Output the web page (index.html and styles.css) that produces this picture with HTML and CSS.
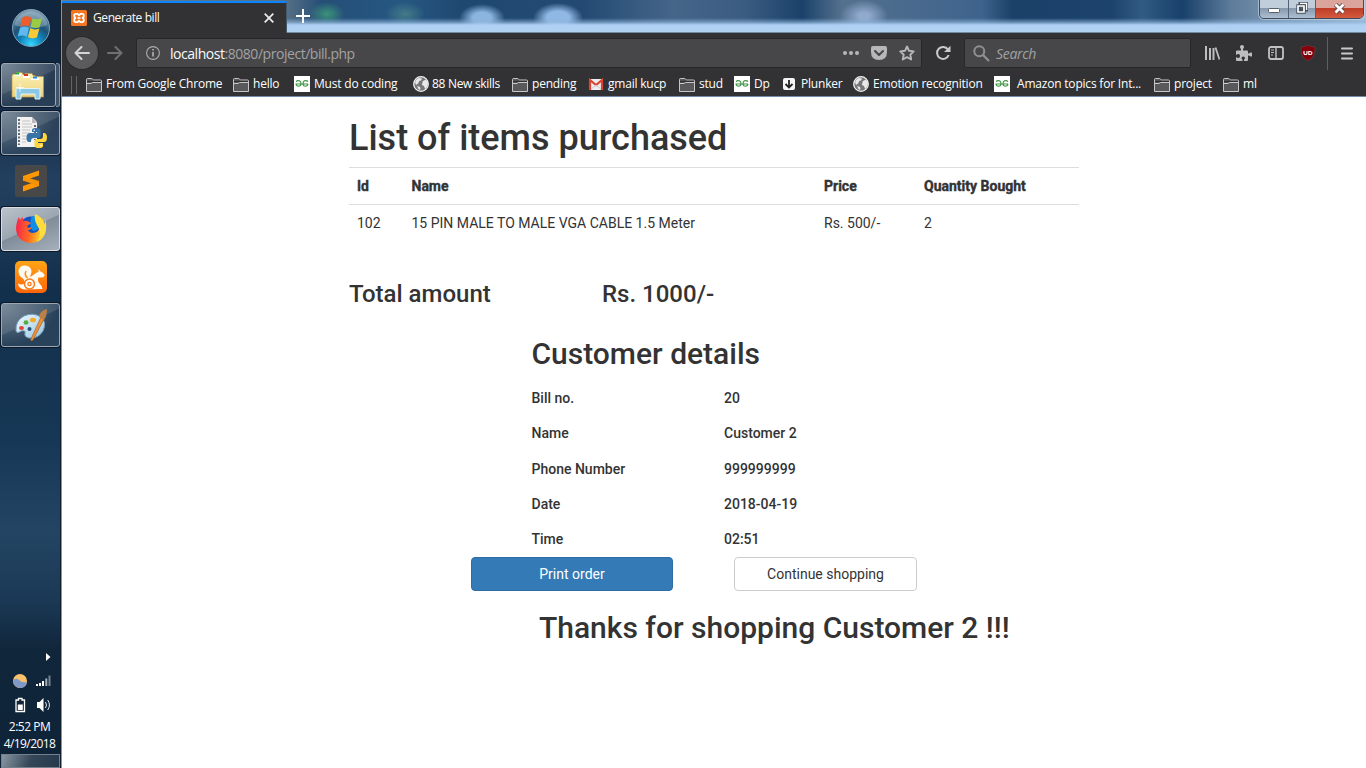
FILE: index.html
```html
<!DOCTYPE html>
<html lang="en">
<head>
<meta charset="utf-8">
<title>Generate bill</title>
<link rel="stylesheet" href="styles.css">
</head>
<body>
<svg class="defs" width="0" height="0" aria-hidden="true">
  <defs>
    <radialGradient id="orb" cx=".5" cy=".95" r=".9"><stop offset="0" stop-color="#35d9ff"/><stop offset=".35" stop-color="#1183bb"/><stop offset=".6" stop-color="#1c5277"/><stop offset="1" stop-color="#7e9cae"/></radialGradient>
    <linearGradient id="fold" x2="0" y2="1"><stop offset="0" stop-color="#fdf2b9"/><stop offset="1" stop-color="#ecd17b"/></linearGradient>
    <linearGradient id="fox" x1="0" y1=".4" x2="1" y2=".5"><stop offset="0" stop-color="#f5254d"/><stop offset=".45" stop-color="#ff6a22"/><stop offset=".8" stop-color="#ffc32a"/><stop offset="1" stop-color="#ffe438"/></linearGradient>
    <linearGradient id="uc" x2="0" y2="1"><stop offset="0" stop-color="#ffa516"/><stop offset="1" stop-color="#ff6508"/></linearGradient>
    <linearGradient id="pal" x2="1" y2="1"><stop offset="0" stop-color="#f4fbff"/><stop offset="1" stop-color="#93c4e5"/></linearGradient>
    <symbol id="folder" viewBox="0 0 16 14"><path d="M.5 13.500V1.500q0-1 1-1h4q.8 0 1.200.8l.6.7h7.200q1 0 1 1v10.500z" fill="#59595b" stroke="#c6c6c8"/><path d="M1 3.500h14" stroke="#303032" stroke-width="1.500"/><path d="M.5 5.500h4.500l1.500-1h9" fill="none" stroke="#c6c6c8"/></symbol>
    <symbol id="gfg" viewBox="0 0 16 16"><path fill="#fff" d="M0 0h16v16H0z"/><path d="M2 5.500q1.500-1.300 3.500-.7 1.500.8 1.500 3 0 2.500-2.300 2.500-2.400 0-2.700-2.300h12M14 5.500q-1.500-1.300-3.500-.7Q9 5.600 9 7.800q0 2.500 2.300 2.500 2.400 0 2.700-2.300" fill="none" stroke="#3f9344" stroke-width="1.100"/></symbol>
    <symbol id="globe" viewBox="0 0 16 16"><circle cx="8" cy="8" r="7.300" fill="#777779" stroke="#eee" stroke-width="1.300"/><path d="M2 6q1-3 4-4l3 .5-1 2-2 .5-.5 2L3 9zM10 5l3-1.500 2 3.500-1 4-2 2-1-3-2-1 .5-3zM4 10l3 1 .5 2L6 14z" fill="#e9e9e9"/></symbol>
  </defs>
</svg>
<div class="desktop">
  <aside class="taskbar">
    <div class="start"><svg width="40" height="40" viewBox="0 0 40 40"><circle cx="20" cy="20" r="18.500" fill="url(#orb)" stroke="#7da0b8" stroke-width="1"/><path d="M3.500 17Q5 6 20 3.500 35 6 36.500 17 20 24 3.500 17z" fill="#d7e6ef" opacity=".28"/><path d="M11.500 9.500q4-2.500 9 0l-2.200 9q-4-2-9 0z" fill="#ed5c2b"/><path d="M21.700 10.200q4.500 2.200 9.300-.2l-2.200 9q-4.700 2-9.300-.2z" fill="#9acb43"/><path d="M9 19.800q4.500-2 9 .2l-2.200 8.800q-4.200-2.500-9-.3z" fill="#5fb8ee"/><path d="M19.200 20.300q4.400 2.200 9.200.1l-2.400 8.900q-4.400 2-9-.3z" fill="#fdc937"/></svg></div>
    <div class="slot stacked"><div class="task"><svg width="34" height="32" viewBox="0 0 34 32"><path d="M1 28V7q0-2 2-2h2V3.500h6l1 2h2v-1h7l1 2h2v1h8.500v20.500z" fill="url(#fold)" stroke="#bb9540" stroke-width=".7"/><path d="M4 6h6M12 8h7M20 10h8" stroke="#fff" stroke-width="2"/><path d="M4 4.500h4" stroke="#20a638" stroke-width="2"/><path d="M13 6h4" stroke="#d73425" stroke-width="2"/><path d="M22 8.500h4" stroke="#2388d8" stroke-width="2"/><path d="M5 30V21q0-1.500 2-1.500h20q2 0 2 1.500v9h-5v-5H10v5z" fill="#8bc8e6" stroke="#e0f4fb"/><path d="M9 14v9M5 18.500h8" stroke="#fff" stroke-width=".9" opacity=".8"/></svg></div><div class="stackedge"></div></div>
    <div class="slot"><div class="task"><svg width="32" height="34" viewBox="0 0 32 34"><path d="M2 1h15l5 5v25H2z" fill="#f2f2f2"/><path d="M17 1v6h5z" fill="#bbb"/><path d="M4 3v26M20 9v15" stroke="#353c44" stroke-width="1.500" stroke-dasharray="2 1.500"/><path d="M7 5h8M7 8h10M7 11h10M7 14h8M7 17h8M7 20h5M7 23h5M7 26h4" stroke="#c4c4c4"/><path d="M17 14q0-2 4-2t4.500 2v6q0 2-2.500 2h-4q-3 0-3 3v1h-2q-2.500 0-2.500-4.500T15 17h7v-1h-5z" fill="#3874a8"/><path d="M28 17h1.500q2.500.5 2.500 4.500 0 4-2.500 4.500H23v1h5v3q0 2-4 2t-4.500-2v-5q0-2 3-2h3q2.500 0 2.500-3z" fill="#ffd53f"/><circle cx="19.200" cy="14.300" r=".8" fill="#fff"/><circle cx="26" cy="29.500" r=".8" fill="#fff"/></svg></div></div>
    <div class="slot"><svg width="32" height="32" viewBox="0 0 32 32"><rect width="32" height="32" rx="2" fill="#484848"/><path d="M24 15.500V21L8 26.500V21z" fill="#ff9800"/><path d="M8 11v4.500L21 20l3-.5V16z" fill="#e88a08"/><path d="M24 5.500v5L8 15.800V11z" fill="#ff9800"/><path d="M8 11.500 24 17v3L8 15.500z" fill="#f59306"/></svg></div>
    <div class="slot"><div class="task active"><svg width="32" height="32" viewBox="0 0 32 32"><circle cx="16" cy="15" r="11.500" fill="#1550c5"/><path d="M17 3q8 0 9 8-2 7-8 7-5-6-1-15" fill="#0f8fe4"/><path d="M2 9q.5-3 2-5l1 3q1-2 3-3v4q4-1 6 1l2 1-4 3 1 2 4-1q-1 3-4 3 1 3 5 3 7-1 7-8 0-5-4-9 8 1 9 9 1-4-1-8 3 5 2 13-2 12-15 13Q2 29 1 16q0-4 1-7z" fill="url(#fox)"/><path d="M20 1q8 3 9 11l2-3q1 14-9 20 6-9 0-17-3-5-2-11z" fill="#ffdc3d"/></svg></div></div>
    <div class="slot"><svg width="32" height="32" viewBox="0 0 32 32"><rect width="32" height="32" rx="5" fill="url(#uc)"/><path d="M9 28.500Q3.500 27.500 3 22.500q3 1.500 5.500.5Q11 21 8 17.500 3 14.500 3.500 9.500q1-5 6.500-5 6.500.5 6.500 6.500-.5 3-2 5 3-1 5-3 2-1.500 4-2V8l2 2.500q4.500 2 4 4.500-1 2-6 1.500-1.500 3 1 6 2.500 2 3 5.500z" fill="#fffaf2"/><circle cx="14.500" cy="23" r="5" fill="none" stroke="#f97a18" stroke-width="1.500"/><circle cx="14.500" cy="23" r="1.600" fill="none" stroke="#f97a18" stroke-width="1.300"/><path d="M12.500 17Q9 14 11 10" fill="none" stroke="#fd941b" stroke-width="1.600"/></svg></div>
    <div class="slot"><div class="task"><svg width="34" height="34" viewBox="0 0 34 34"><path d="M2 23q-1-10 8-15 9-4 17 1 6 5 2 14-5 8-14 7-5-1-4-5 1-3-4-2-4 3-5 0z" fill="url(#pal)" stroke="#759dbc"/><ellipse cx="7.500" cy="20" rx="2.500" ry="2" fill="#e74632"/><ellipse cx="12" cy="14.500" rx="2.500" ry="2.200" fill="#54ae43"/><ellipse cx="19" cy="12" rx="3" ry="2.300" fill="#f4aa24"/><circle cx="15.500" cy="21" r="2" fill="#25517b"/><path d="M27 9 17 31q-1 3 2 1L30 11z" fill="#ef9436" stroke="#a65c26" stroke-width=".7"/><path d="M25 9q0-4 5-7l3-1q0 7-3 11z" fill="#b98049"/></svg></div></div>
    <div class="tray">
      <div class="tray-arrow"><svg width="5" height="8"><path d="M0 0l4.500 4L0 8z" fill="#fff"/></svg></div>
      <div class="tray-row"><svg width="16" height="16" viewBox="0 0 16 16"><circle cx="8" cy="8" r="7" fill="#fac16a"/><path d="M1 8q3-4 6-1 3 3 8 2-1 6-7 6-6-1-7-7z" fill="#7e99ca"/></svg><svg width="16" height="14" viewBox="0 0 16 14"><path d="M1 10v2M4 9v3M7 7v5" transform="translate(1)" stroke="#fff" stroke-width="2"/><path d="M11.300 4.500V12" stroke="#a9b2ba" stroke-width="2"/><path d="M14.500 1.500V12" stroke="#77828d" stroke-width="2"/></svg></div>
      <div class="tray-row"><svg width="16" height="16" viewBox="0 0 16 16"><path d="M6.500 3V1.500h3.500V3H12.500v11.500H4V3z" fill="none" stroke="#fff" stroke-width="1.300"/><path d="M5.800 7.500h5V13h-5z" fill="#fff"/></svg><svg width="16" height="16" viewBox="0 0 16 16"><path d="M2 5h2.500l4-4v14l-4-4H2z" fill="#fff"/><path d="M10.500 5q2 3 0 6M12.700 3q3.500 5 0 10" fill="none" stroke="#e4e9ed" stroke-width="1"/></svg></div>
      <div class="clock">2:52 PM</div><div class="clock date">4/19/2018</div>
    </div>
    <div class="show-desktop"></div>
  </aside>

  <div class="browser">
    <header class="tabstrip">
      <div class="tab"><svg width="16" height="16" viewBox="0 0 16 16"><rect width="16" height="16" rx="1.500" fill="#f37623"/><path d="M5 3.800q-1.800 0-1.800 1.900T5 7.900q-1.800.2-1.800 2.200T5 12.200h1.500L8 10.800l1.500 1.400H11q1.800 0 1.800-2.100T11 7.900q1.800-.2 1.800-2.200T11 3.800H9.500L8 5.200 6.500 3.800z" fill="none" stroke="#fff" stroke-width="1.800"/><path d="M6.500 8h3" stroke="#fff" stroke-width="1.600"/></svg><span class="tab-title">Generate bill</span><svg width="10" height="10" viewBox="0 0 10 10"><path d="m.7.7 8.600 8.600m0-8.600L.7 9.300" stroke="#eee" stroke-width="1.700"/></svg></div>
      <svg class="plus" width="14" height="14" viewBox="0 0 14 14"><path d="M7 0v14M0 7h14" stroke="#fff" stroke-width="2"/></svg>
      <div class="winctl">
        <div class="wc min"><svg width="12" height="5"><rect x=".5" y=".5" width="11" height="4" rx="1" fill="#fff" stroke="#55606c"/></svg></div>
        <div class="wc max"><svg width="12" height="12" viewBox="0 0 12 12"><path d="M4 1.500h6.500V8H4z" fill="none" stroke="#46515e" stroke-width="3"/><path d="M4 1.500h6.500V8" fill="none" stroke="#fff" stroke-width="1.500"/><path d="M2 4h6v6H2z" fill="none" stroke="#46515e" stroke-width="3.400"/><path d="M2 4h6v6H2z" fill="none" stroke="#fff" stroke-width="1.700"/></svg></div>
        <div class="wc close"><svg width="13" height="11" viewBox="0 0 13 11"><path d="m2.500 1.500 8 8m0-8-8 8" stroke="#64444a" stroke-width="4.500"/><path d="m2.500 1.500 8 8m0-8-8 8" stroke="#fff" stroke-width="2.700"/></svg></div>
      </div>
    </header>
    <nav class="navbar">
      <div class="back"><svg width="16" height="14" viewBox="0 0 16 14"><path d="M15 7H1.500M7.500 1l-6 6 6 6" fill="none" stroke="#d5d5d7" stroke-width="2" stroke-linecap="round" stroke-linejoin="round"/></svg></div>
      <svg class="fwd" width="16" height="14" viewBox="0 0 16 14"><path d="M1 7h13.500m-6-6 6 6-6 6" fill="none" stroke="#707072" stroke-width="2" stroke-linecap="round" stroke-linejoin="round"/></svg>
      <div class="urlbar">
        <svg width="14" height="14" viewBox="0 0 14 14"><circle cx="7" cy="7" r="6.400" fill="none" stroke="#adadaf" stroke-width="1.100"/><path d="M7 6v4.500M7 3v1.500" stroke="#bcbcbe" stroke-width="1.500"/></svg>
        <div class="url"><b>localhost</b>:8080/project/bill.php</div>
        <svg width="16" height="16" viewBox="0 0 16 16"><g fill="#b7b7b9"><circle cx="2" cy="8" r="2"/><circle cx="8" cy="8" r="2"/><circle cx="14" cy="8" r="2"/></g></svg>
        <svg width="16" height="16" viewBox="0 0 16 16"><path d="M2 1h12q2 0 2 2v4q0 8-8 8T0 7V3q0-2 2-2z" fill="#b7b7b9"/><path d="m4 6 4 4 4-4" fill="none" stroke="#474749" stroke-width="2" stroke-linecap="round" stroke-linejoin="round"/></svg>
        <svg width="16" height="16" viewBox="0 0 16 16"><path d="m8 1.500 2 4.300 4.700.6-3.400 3.300.9 4.800L8 12.200l-4.200 2.300.9-4.800-3.400-3.300L6 5.800z" fill="none" stroke="#b7b7b9" stroke-width="1.900" stroke-linejoin="round"/></svg>
      </div>
      <svg class="reload" width="16" height="16" viewBox="0 0 16 16"><path d="M13 4.500A6 6 0 1 0 13.700 10" fill="none" stroke="#c9c9cb" stroke-width="2"/><path d="M15.500.8V7H9z" fill="#c9c9cb"/></svg>
      <div class="search"><svg width="17" height="17" viewBox="0 0 17 17"><circle cx="6.300" cy="6.300" r="5" fill="none" stroke="#909092" stroke-width="2"/><path d="m10 10 6 6" stroke="#909092" stroke-width="2.300"/></svg><span>Search</span></div>
      <div class="tools">
        <svg width="16" height="16" viewBox="0 0 16 16"><path d="M2 1v14M6 3v12M9.500 3v12" stroke="#bdbdbf" stroke-width="2"/><path d="m11.500 2.500 4 12" stroke="#bdbdbf" stroke-width="1.800"/></svg>
        <svg width="16" height="16" viewBox="0 0 16 16"><path d="M0 6.500q0-1 1-1h4V4q-1-1-1-2 0-2 2-2t2 2q0 1-1 2v1.500h4q1 0 1 1v2h1q1-1 2-1 1.500 0 1.500 2t-1.500 2q-1 0-2-1h-1V15q0 1-1 1H8v-1.500q1-.5 1-1.500 0-1.500-1.700-1.500T5.500 13q0 1 1 1.500V16H1q-1 0-1-1v-3q1 1 2.500 1T4 11t-1.500-2Q1 9 0 10z" fill="#bdbdbf"/></svg>
        <svg width="16" height="16" viewBox="0 0 16 16"><rect x="1" y="2" width="14" height="12" rx="2" fill="none" stroke="#c1c1c3" stroke-width="1.800"/><path d="M8 2v12" stroke="#c1c1c3" stroke-width="1.400"/><path d="M3 5h3M3 7.500h3M3 10h2" stroke="#bdbdbf"/></svg>
        <svg width="16" height="16" viewBox="0 0 16 16"><path d="M8 0q3 2 7 2 1 10-7 14Q0 12 1 2 5 2 8 0z" fill="#860009" stroke="#5d454a" stroke-width=".7"/><path d="M4 6v2.500q0 1 1.500 1T7 8.500V6M8.800 9.500v-3H10q2 .2 2 1.500t-2 1.500z" fill="none" stroke="#fff" stroke-width="1.100"/></svg>
      </div>
      <div class="menu"><svg width="12" height="13" viewBox="0 0 12 13"><path d="M1 1.500h10M1 6.500h10M1 11.500h10" stroke="#c8c8ca" stroke-width="2" stroke-linecap="round"/></svg></div>
    </nav>
    <div class="bookmarks">
      <i class="grip"></i>
      <div class="bm"><svg class="f"><use href="#folder"/></svg><span>From Google Chrome</span></div>
      <div class="bm"><svg class="f"><use href="#folder"/></svg><span>hello</span></div>
      <div class="bm"><svg><use href="#gfg"/></svg><span>Must do coding</span></div>
      <div class="bm"><svg><use href="#globe"/></svg><span class="tight">88 New skills</span></div>
      <div class="bm"><svg class="f"><use href="#folder"/></svg><span>pending</span></div>
      <div class="bm"><svg viewBox="0 0 16 16"><path fill="#eee" d="M1 3h14v11H1z"/><path d="M2 14V4l6 5 6-5v10" fill="none" stroke="#d94435" stroke-width="2.200"/><path d="m3 13 5-4 5 4" fill="none" stroke="#ccc"/></svg><span>gmail kucp</span></div>
      <div class="bm"><svg class="f"><use href="#folder"/></svg><span>stud</span></div>
      <div class="bm"><svg><use href="#gfg"/></svg><span>Dp</span></div>
      <div class="bm"><svg viewBox="0 0 16 16"><rect x="1" y="2" width="12" height="12" rx="2" fill="#f5f5f5"/><path d="M7 4v7M3.500 8 7 11.500 10.500 8" fill="none" stroke="#222" stroke-width="1.800"/></svg><span class="plunk">Plunker</span></div>
      <div class="bm"><svg><use href="#globe"/></svg><span>Emotion recognition</span></div>
      <div class="bm wide"><svg><use href="#gfg"/></svg><span>Amazon topics for Int...</span></div>
      <div class="bm"><svg class="f"><use href="#folder"/></svg><span>project</span></div>
      <div class="bm"><svg class="f"><use href="#folder"/></svg><span>ml</span></div>
    </div>
    <main class="page">
      <div class="bill">
        <h1>List of items purchased</h1>
        <table class="items">
          <colgroup><col class="c-id"><col class="c-name"><col class="c-price"><col></colgroup>
          <tr><th>Id</th><th>Name</th><th>Price</th><th>Quantity Bought</th></tr>
          <tr><td>102</td><td>15 PIN MALE TO MALE VGA CABLE 1.5 Meter</td><td>Rs. 500/-</td><td>2</td></tr>
        </table>
        <div class="total"><h3>Total amount</h3><h3>Rs. 1000/-</h3></div>
        <section class="customer">
          <h2>Customer details</h2>
          <dl>
            <dt>Bill no.</dt><dd>20</dd>
            <dt>Name</dt><dd>Customer 2</dd>
            <dt>Phone Number</dt><dd>999999999</dd>
            <dt>Date</dt><dd>2018-04-19</dd>
            <dt>Time</dt><dd>02:51</dd>
          </dl>
        </section>
        <div class="actions"><button class="btn primary">Print order</button><button class="btn">Continue shopping</button></div>
        <h2 class="thanks">Thanks for shopping Customer 2 !!!</h2>
      </div>
    </main>
  </div>
</div>
</body>
</html>
```
FILE: styles.css
```css
* { box-sizing: border-box; }
body { margin: 0; overflow: hidden; background: #fff; font-family: "Open Sans", "Noto Sans", sans-serif; }
svg { display: block; flex: none; }
.defs { position: absolute; }
.desktop { display: grid; grid-template-columns: 62px 1fr; width: 1366px; height: 768px; }

/* taskbar */
.taskbar { display: flex; flex-direction: column; background: linear-gradient(#10253e 0, #112841 90px, #23405f 180px, #1c3a57 230px, #12304c 290px, #163755 440px, #234563 530px, #1b3955 600px, #10263b 650px, #0e2338 100%); border-right: 1px solid #8298aa; box-shadow: inset -1px 0 #101d2b; }
.start { height: 61px; padding: 8px 0 0 11px; }
.slot { display: flex; align-items: center; justify-content: center; height: 48px; padding: 2px 1px 2px 1px; }
.task { display: flex; flex: 1; align-items: center; justify-content: center; height: 44px; border: 1px solid #9ba8b4; border-radius: 3px; background: radial-gradient(ellipse at 0 0, #a6b1bc99, transparent 70%), linear-gradient(155deg, #76859270 45%, #40546877 46%); box-shadow: 0 0 0 1px #0c1828; }
.stacked .task { padding-right: 1px; }
.task.active { background: linear-gradient(155deg, #bac2ca 0, #9ba6b1 48%, #7f8c99 49%, #a6b0bb 100%); border-color: #d9dfe4; }
.stackedge { width: 4px; height: 44px; border: 1px solid #8795a3; border-left: 0; border-radius: 0 3px 3px 0; background: #415468; }
.tray { margin-top: auto; color: #fff; font-size: 12px; text-align: center; }
.tray-arrow { padding: 3px 0 0 46px; height: 20px; margin-bottom: -1px; }
.tray-row { display: flex; justify-content: space-between; align-items: center; height: 24px; padding: 0 10px 0 12px; }
.clock { height: 17px; line-height: 17px; padding-right: 2px; letter-spacing: -.5px; white-space: nowrap; }
.tray-row + .clock { margin-top: 1px; }
.date { letter-spacing: -.6px; }
.show-desktop { height: 14px; margin: 2px 1px 0; border: 1px solid #74818d; background: linear-gradient(110deg, #8996a3, #344657 50%, #263a4c); }

/* browser chrome */
.browser { display: flex; flex-direction: column; min-width: 0; }
.tabstrip { display: flex; position: relative; height: 33px; border-bottom: 1px solid #7189a4; background:
  linear-gradient(transparent 18px, #8eb5db99 22px, #afd0f2 25px, #b1d2f1 32px),
  radial-gradient(ellipse 18px 12px at 265px 14px, #3c937a, #3c937a00),
  radial-gradient(ellipse 20px 12px at 343px 14px, #437b87, #437b8700),
  radial-gradient(ellipse 23px 14px at 420px 18px, #8bb4df 40%, #8bb4df00),
  radial-gradient(ellipse 25px 15px at 496px 18px, #90b8e5 45%, #90b8e500),
  radial-gradient(ellipse 24px 16px at 802px 16px, #90a9cd 20%, #90a9cd00),
  linear-gradient(90deg, #687c90 0, #567086 224px, #244e76 260px, #265782 340px, #1f4870 400px, #234a72 520px, #456589 610px, #3c5d82 680px, #1b416a 740px, #54718e 780px, #3e638c 920px, #1b4169 950px, #1c436c 1050px, #315b82 1080px, #18406a 1120px, #5f7d9b 1170px, #a6bfd7 1304px); }
.tab { display: flex; align-items: center; width: 225px; height: 32px; margin-top: 1px; padding: 0 12px 1px 9px; border-top: 2px solid #0a84ff; background: #323234; border-right: 1px solid #46596c; }
.tab-title { flex: 1; margin-left: 6px; color: #fafafa; font-size: 12px; line-height: 16px; letter-spacing: -.4px; }
.plus { margin: 9px 0 0 9px; }
.winctl { display: flex; position: absolute; top: -1px; right: 2px; height: 20px; border: 1px solid #3c4b5d; border-radius: 0 0 5px 5px; overflow: hidden; box-shadow: 0 0 0 1px #d2e2f088; }
.wc { display: flex; align-items: center; justify-content: center; width: 29px; background: linear-gradient(#c0cedc 45%, #8698ab 46%, #adbfd1); border-right: 1px solid #526377; }
.wc.min { padding-top: 3px; }
.wc.max { width: 27px; padding-bottom: 2px; }
.wc.close { width: 47px; border: 0; padding-bottom: 2px; background: linear-gradient(#dba59b 45%, #bd3c26 46%, #d45b3f); }
.navbar { display: flex; align-items: center; height: 40px; padding-left: 4px; background: #323234; }
.back { display: grid; place-items: center; width: 32px; height: 32px; border-radius: 50%; background: #5b5b5d; box-shadow: 0 0 0 1px #2a2a2c; }
.fwd { margin-left: 9px; }
.urlbar, .search { display: flex; align-items: center; height: 30px; border: 1px solid #272729; border-radius: 2px; background: #474749; }
.urlbar { width: 786px; margin-left: 13px; padding: 0 6px 0 9px; gap: 12px; }
.url { flex: 1; margin: 1px 0 0 -2px; color: #a2a2a4; font-size: 14px; letter-spacing: -.46px; }
.url b { color: #fafafa; font-weight: 400; }
.reload { margin-left: 13px; }
.search { width: 227px; margin-left: 13px; padding-left: 8px; gap: 6px; color: #a2a2a4; font-size: 14px; font-style: italic; letter-spacing: -.3px; }
.tools { display: flex; gap: 16px; margin-left: 13px; }
.menu { display: grid; place-items: center; height: 33px; margin-left: 11px; padding-left: 13px; border-left: 1px solid #606062; }
.bookmarks { display: grid; grid-template-columns: 24px 147px 61px 119px 99px 76px 91px 55px 48px 71px 141px 160px 69px 60px; align-items: center; height: 24px; background: #323234; border-bottom: 1px solid #6f8ca9; color: #fff; font-size: 12px; line-height: 16px; }
.grip { width: 6px; height: 18px; margin-left: 9px; border: solid #646466; border-width: 0 1px; }
.bm { display: flex; align-items: center; gap: 4px; white-space: nowrap; letter-spacing: -.2px; }
.bm span { margin-top: -2px; }
.bm svg { width: 16px; height: 16px; margin-top: -1px; }
.bm svg.f { height: 14px; margin-top: 0; }
.bm .tight { margin-left: -1px; letter-spacing: -.3px; }
.bm .plunk { margin-left: -1px; }
.bm.wide { gap: 7px; }

/* bill page */
.page { flex: 1; background: #fff; color: #333; font-family: Roboto, sans-serif; font-size: 14px; line-height: 20px; }
.bill { width: 730px; margin-left: 287px; padding-top: 22px; }
h1, h2, h3 { margin: 0; font-weight: 500; line-height: 1.1; }
h1 { font-size: 36px; margin-bottom: 8px; }
h2 { font-size: 30px; }
h3 { font-size: 24px; }
.items { width: 100%; margin-bottom: 20px; border-collapse: collapse; table-layout: fixed; }
.items th, .items td { padding: 8px; border-top: 1px solid #ddd; text-align: left; }
.items th { -webkit-text-stroke: .4px #333; }
.c-id { width: 54.500px; }
.c-name { width: 412.500px; }
.c-price { width: 100px; }
.total { display: grid; grid-template-columns: 253px 1fr; padding: 20px 0 10px; }
.customer { margin-left: 182.500px; padding-top: 20px; }
dl { display: grid; grid-template-columns: 192.500px 1fr; grid-template-rows: 35px 36px 35px 35px 15px; margin: 21px 0 10px; font-weight: 500; line-height: 15.400px; }
dd { margin: 0; }
.actions { display: flex; gap: 61px; margin: 0 0 20px 122px; }
.btn { width: 183px; height: 34px; padding: 6px 12px; border: 1px solid #ccc; border-radius: 4px; background: #fff; color: #333; font: 400 14px/20px Roboto, sans-serif; }
.btn.primary { width: 202px; border-color: #2e6da4; background: #337ab7; color: #fff; }
.thanks { margin-left: 190px; }
```
